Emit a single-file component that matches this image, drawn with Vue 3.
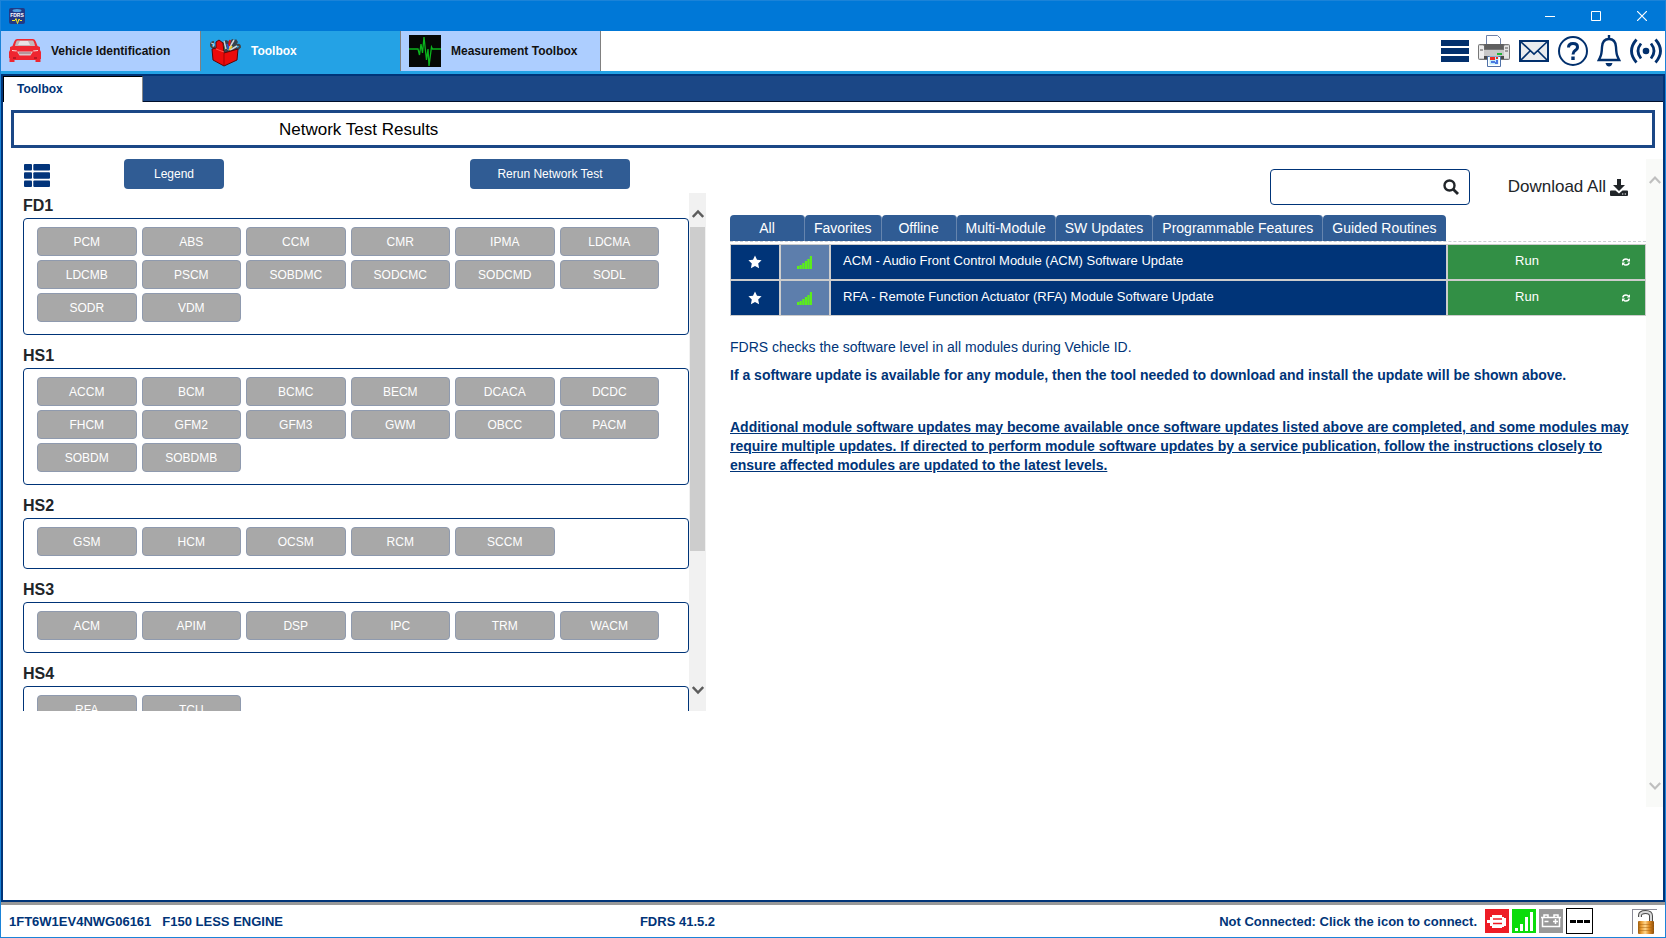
<script setup>
import { ref } from 'vue'

const search = ref('')

const networks = [
  { name: 'FD1', modules: ['PCM', 'ABS', 'CCM', 'CMR', 'IPMA', 'LDCMA', 'LDCMB', 'PSCM', 'SOBDMC', 'SODCMC', 'SODCMD', 'SODL', 'SODR', 'VDM'] },
  { name: 'HS1', modules: ['ACCM', 'BCM', 'BCMC', 'BECM', 'DCACA', 'DCDC', 'FHCM', 'GFM2', 'GFM3', 'GWM', 'OBCC', 'PACM', 'SOBDM', 'SOBDMB'] },
  { name: 'HS2', modules: ['GSM', 'HCM', 'OCSM', 'RCM', 'SCCM'] },
  { name: 'HS3', modules: ['ACM', 'APIM', 'DSP', 'IPC', 'TRM', 'WACM'] },
  { name: 'HS4', modules: ['RFA', 'TCU'] }
]

const filters = ['All', 'Favorites', 'Offline', 'Multi-Module', 'SW Updates', 'Programmable Features', 'Guided Routines']

const updates = [
  'ACM - Audio Front Control Module (ACM) Software Update',
  'RFA - Remote Function Actuator (RFA) Module Software Update'
]
</script>

<template>
  <div class="window">
    <header class="titlebar">
      <svg class="app-icon" viewBox="0 0 16 16" width="16" height="16" aria-hidden="true">
        <rect width="16" height="16" rx="2" fill="#213a86" />
        <ellipse cx="8" cy="2.5" rx="4.5" ry="1.6" fill="#4c9fe0" />
        <text x="8" y="9" text-anchor="middle" class="app-icon-text">FDRS</text>
        <path d="M3 12.5h3l1-2 1.5 5 1.5-4.500 1 1.500h2" fill="none" stroke="#f4ec2c" />
      </svg>
      <div class="window-controls">
        <button type="button" aria-label="Minimize"><svg width="10" height="10" viewBox="0 0 10 10"><path d="M0 5.500h10" stroke="#fff" /></svg></button>
        <button type="button" aria-label="Maximize"><svg width="10" height="10" viewBox="0 0 10 10"><path d="M.5.5h9v9h-9z" fill="none" stroke="#fff" /></svg></button>
        <button type="button" aria-label="Close"><svg width="10" height="10" viewBox="0 0 10 10"><path d="M0 0l10 10M10 0L0 10" stroke="#fff" stroke-width="1.200" /></svg></button>
      </div>
    </header>

    <nav class="app-tabs">
      <button type="button" class="app-tab">
        <svg class="tab-icon" width="32" height="32" viewBox="0 0 32 32" aria-hidden="true">
          <path d="M8 4h16q2 0 3 3l1.500 4 2.500 1v3l1 2v6.500q0 .5-.5.5v3h-5v-2H5.500v2h-5v-4L0 23v-6l1-2v-3l2.500-1L5 7q1-3 3-3z" fill="#ef2630" />
          <path d="M8.500 5.500h15q1.500 0 2.500 5.500H6q1-5.500 2.500-5.500z" fill="#c5b6ba" />
          <path d="M11 6h8l2 4H9z" fill="#e9e3e5" />
          <path d="M3 15l5 .5-.5 1L3 16zM29 15l-5 .5.5 1 4.500-.5z" fill="#fbdada" />
          <path d="M8 16.500h16l-2.500 4h-11z" fill="#d9c6c9" />
          <path d="M10 18h12" stroke="#93666c" />
          <path d="M4 23h3M25 23h3" stroke="#a91520" stroke-width="1.500" />
        </svg>
        Vehicle Identification
      </button>
      <button type="button" class="app-tab active">
        <svg class="tab-icon" width="32" height="32" viewBox="0 0 32 32" aria-hidden="true">
          <path d="M6 12q-4 1-4-2 0-3 3-3M27 10q4-1 4 2l-2 2" fill="none" stroke="#444" stroke-width="2" />
          <path d="M2 8l3 1-1 3" fill="none" stroke="#c4c8cc" />
          <path d="M12 8l5-3 4 2 2-3 3 1 1-1 2 3-2 3 2 4-5 5-11-2z" fill="#35424f" />
          <path d="M15 6l2 8M25 5l-6 10M28 11l-7 4" stroke="#d1d5d8" stroke-width="1.500" />
          <path d="M21 5l-1 6" stroke="#d91118" stroke-width="2" /><path d="M18 9l2 6" stroke="#2758c8" stroke-width="2" />
          <path d="M20 15l3-4" stroke="#f0d127" stroke-width="1.500" /><path d="M14 10l1 5" stroke="#24b04b" stroke-width="1.500" />
          <path d="M3 14l4-1V7l3-2 4 3 1 10 14-4-1 11-13 6-11-6z" fill="#ec0b0b" stroke="#5c0505" />
          <path d="M15 18v12" stroke="#a70303" />
          <path d="M15 17l-8-3" stroke="#ff5a4f" />
        </svg>
        Toolbox
      </button>
      <button type="button" class="app-tab">
        <svg class="tab-icon" width="32" height="32" viewBox="0 0 32 32" aria-hidden="true">
          <rect width="32" height="32" fill="#050805" />
          <path d="M0 14h9l1.500 6L12 9l1.500 9L15 2l2.500 23L19 14l1 17 2.500-19 1 2H32" fill="none" stroke="#0bb51d" stroke-width="1.300" />
        </svg>
        Measurement Toolbox
      </button>
      <div class="tools">
        <button type="button" aria-label="Menu"><svg width="28" height="22" viewBox="0 0 28 22"><path d="M0 0h28v6H0zM0 8h28v6H0zM0 16h28v6H0z" fill="#02306d" /></svg></button>
        <button type="button" aria-label="Print">
          <svg width="32" height="32" viewBox="0 0 32 32">
            <path d="M8.500 10V.5h11l3 3V10z" fill="#fff" stroke="#7182a8" />
            <path d="M5 9h22v5H5z" fill="#606060" />
            <path d="M.5 10.500q0-1 1-1H6v5h20v-5h4.500q1 0 1 1v13q0 1-1 1h-29q-1 0-1-1z" fill="#c8c8c8" stroke="#777" />
            <path d="M1 11h5v12H1z" fill="#eee" /><path d="M26 11h5v12h-5z" fill="#e4e4e4" />
            <path d="M27 13h3M27 16h3M2 15h3" stroke="#555" /><path d="M19 19h5" stroke="#22b43a" stroke-width="2" />
            <path d="M6 21h20v3H6z" fill="#4b4b4b" />
            <path d="M9.500 21.500h13v10h-13z" fill="#fff" stroke="#5072a8" />
            <path d="M11.500 21.500h9v8h-9z" fill="#bdeafa" />
            <path d="M12 22h5v3h-5zM18 22h2v2h-2z" fill="#ee2b22" /><path d="M13 27h4M18 26h2M17 28h3" stroke="#2451d8" stroke-width="1.500" />
          </svg>
        </button>
        <button type="button" aria-label="Messages"><svg width="30" height="22" viewBox="0 0 30 22"><path d="M1 1h28v20H1z" fill="#e9ebee" stroke="#02306d" stroke-width="2" /><path d="M1 1l14 13L29 1M1 21l10-10M29 21L19 11" fill="none" stroke="#02306d" stroke-width="1.700" /></svg></button>
        <button type="button" aria-label="Help"><svg width="30" height="30" viewBox="0 0 30 30"><circle cx="15" cy="15" r="14" fill="#fff" stroke="#02306d" stroke-width="2" /><path d="M10.500 11.500q0-4 4.500-4t4.500 3.600q0 2.200-2.400 3.500Q15 16 15 18.500" fill="none" stroke="#02306d" stroke-width="3" /><path d="M13.300 20.500h3.400v3.400h-3.400z" fill="#02306d" /></svg></button>
        <button type="button" aria-label="Notifications"><svg width="24" height="32" viewBox="0 0 24 32"><path d="M12 0v4M12 4q-6.500 0-7 8-.3 8-2 10.500L1.800 25h20.400L21 22.500Q19.300 20 19 12q-.5-8-7-8z" fill="none" stroke="#02306d" stroke-width="2.400" /><path d="M8.500 28h7q-1 3.500-3.500 3.500T8.500 28z" fill="#02306d" /></svg></button>
        <button type="button" aria-label="Connection"><svg width="32" height="26" viewBox="0 0 32 26"><circle cx="16" cy="13" r="3.300" fill="#02306d" /><path d="M11 5.500q-6 7.500 0 15M21 5.500q6 7.500 0 15M6.500 1.500q-10 11.500 0 23M25.500 1.500q10 11.500 0 23" fill="none" stroke="#02306d" stroke-width="2.800" /></svg></button>
      </div>
    </nav>

    <main class="workspace">
      <div class="sub-tabs"><button type="button" class="sub-tab">Toolbox</button></div>
      <h1 class="page-title">Network Test Results</h1>

      <div class="columns">
        <section class="network">
          <div class="network-actions">
            <button type="button" class="list-toggle" aria-label="List view">
              <svg width="26" height="23" viewBox="0 0 26 23"><g fill="#02347b"><rect width="8" height="6.500" rx="1" /><rect y="8.200" width="8" height="6.500" rx="1" /><rect y="16.400" width="8" height="6.500" rx="1" /><rect x="9.300" width="16.700" height="6.500" rx="1" /><rect x="9.300" y="8.200" width="16.700" height="6.500" rx="1" /><rect x="9.300" y="16.400" width="16.700" height="6.500" rx="1" /></g></svg>
            </button>
            <button type="button" class="primary legend">Legend</button>
            <button type="button" class="primary rerun">Rerun Network Test</button>
          </div>
          <div class="network-scroll">
            <div class="network-list">
              <section v-for="network in networks" :key="network.name" class="group">
                <h2>{{ network.name }}</h2>
                <div class="modules">
                  <button v-for="mod in network.modules" :key="mod" type="button" class="module">{{ mod }}</button>
                </div>
              </section>
            </div>
            <div class="scrollbar">
              <span class="arrow"><svg width="12" height="10" viewBox="0 0 12 10"><path d="M.8 8L6 2.500 11.200 8" fill="none" stroke="#5c5c5c" stroke-width="2.500" /></svg></span>
              <span class="track"><span class="thumb"></span></span>
              <span class="arrow"><svg width="12" height="10" viewBox="0 0 12 10"><path d="M.8 2L6 7.500 11.200 2" fill="none" stroke="#5c5c5c" stroke-width="2.500" /></svg></span>
            </div>
          </div>
        </section>

        <section class="software">
          <div class="software-body">
            <div class="software-actions">
              <div class="search">
                <input v-model="search" type="text" aria-label="Search" />
                <button type="button" aria-label="Search"><svg width="16" height="16" viewBox="0 0 16 16"><circle cx="6.500" cy="6.500" r="5" fill="none" stroke="#212529" stroke-width="2.400" /><path d="M10.200 10.200l4.800 4.800" stroke="#212529" stroke-width="2.800" /></svg></button>
              </div>
              <button type="button" class="download">
                Download All
                <svg width="18" height="17" viewBox="0 0 18 17"><path d="M7 0h4v6h4l-6 6-6-6h4zM1 11.500h4.500L9 14.500l3.500-3H17q1 0 1 1V16q0 1-1 1H1q-1 0-1-1v-3.500q0-1 1-1z" fill="#212529" /><path d="M12 15h1.300M14.700 15H16" stroke="#fff" stroke-width="1.200" /></svg>
              </button>
            </div>

            <div class="filters">
              <button v-for="filter in filters" :key="filter" type="button">{{ filter }}</button>
            </div>

            <table class="updates">
              <tbody>
                <tr v-for="update in updates" :key="update">
                  <td class="fav">
                    <button type="button" aria-label="Favorite"><svg width="14" height="14" viewBox="0 0 14 14"><path d="M7 .5l2 4.200 4.600.6-3.400 3.200.9 4.700L7 11l-4.100 2.200.9-4.700L.4 5.300 5 4.700z" fill="#fff" /></svg></button>
                  </td>
                  <td class="signal">
                    <svg width="15" height="13" viewBox="0 0 15 13" aria-label="Signal"><path d="M0 10h2.300v3H0zM2.600 9h2.200v4H2.600zM5.200 7h2.200v6H5.200zM7.800 5H10v8H7.800zM10.300 3h2.200v10h-2.200zM12.800 0H15v13h-2.200z" fill="#5bee1b" /></svg>
                  </td>
                  <td class="update-name"><span>{{ update }}</span></td>
                  <td class="run">
                    <button type="button">
                      <span class="run-label">Run</span>
                      <span class="run-icon"><svg width="8" height="8" viewBox="0 0 8 8"><path d="M.7 3.500Q1.200.9 4 .9q1.700 0 2.500 1.300M7.300 4.500Q6.800 7.100 4 7.100q-1.700 0-2.500-1.300" fill="none" stroke="#fff" stroke-width="1.500" /><path d="M8 .3v3.200H4.800zM0 7.700V4.500h3.200z" fill="#fff" /></svg></span>
                    </button>
                  </td>
                </tr>
              </tbody>
            </table>

            <div class="notes">
              <p>FDRS checks the software level in all modules during Vehicle ID.</p>
              <p class="strong">If a software update is available for any module, then the tool needed to download and install the update will be shown above.</p>
              <p class="strong underlined">Additional module software updates may become available once software updates listed above are completed, and some modules may require multiple updates. If directed to perform module software updates by a service publication, follow the instructions closely to ensure affected modules are updated to the latest levels.</p>
            </div>
          </div>
          <div class="scrollbar pale">
            <span class="arrow"><svg width="12" height="10" viewBox="0 0 12 10"><path d="M.8 8L6 2.500 11.200 8" fill="none" stroke="#bfbfbf" stroke-width="2.200" /></svg></span>
            <span class="track"></span>
            <span class="arrow"><svg width="12" height="10" viewBox="0 0 12 10"><path d="M.8 2L6 7.500 11.200 2" fill="none" stroke="#bfbfbf" stroke-width="2.200" /></svg></span>
          </div>
        </section>
      </div>
    </main>

    <footer class="status">
      <div class="vehicle"><span>1FT6W1EV4NWG06161</span><span>F150 LESS ENGINE</span></div>
      <div class="version">FDRS 41.5.2</div>
      <div class="connection">
        <span class="message">Not Connected: Click the icon to connect.</span>
        <button type="button" aria-label="Connect device"><svg width="24" height="24" viewBox="0 0 24 24"><rect width="24" height="24" fill="#ee1c25" /><path d="M7 6h10v2h2v1h2v8h-2v1h-2v1H7v-2H5v-3H2v-3h3V8h2z" fill="#fff" /><path d="M8 10h9M8 14.500h9" stroke="#ee1c25" stroke-width="1.500" /></svg></button>
        <svg width="24" height="24" viewBox="0 0 24 24" aria-label="Signal strength"><rect width="24" height="24" fill="#0bdc0b" /><path d="M3 19h3v3H3zM8 15h3v7H8zM13 8h3v14h-3zM18 3h3v19h-3z" fill="#fff" /></svg>
        <svg width="24" height="24" viewBox="0 0 24 24" aria-label="Battery"><rect width="24" height="24" fill="#999" /><path d="M2 8.500h20M3.500 8v9.500h17V8M5 8V6h4v2M15 8V6h4v2M5.500 12.500h4M14 12.500h5M16.500 10v5" fill="none" stroke="#fff" stroke-width="1.500" /></svg>
        <span class="voltage"><svg width="20" height="3" viewBox="0 0 20 3"><path d="M0 1.500h6M7 1.500h6M14 1.500h6" stroke="#000" stroke-width="3" /></svg></span>
        <button type="button" class="lock" aria-label="Unlocked">
          <svg width="18" height="24" viewBox="0 0 18 24">
            <defs><linearGradient id="brass"><stop offset="0" stop-color="#9a5a0c" /><stop offset=".2" stop-color="#e99a31" /><stop offset=".45" stop-color="#ffd68c" /><stop offset=".7" stop-color="#df8a22" /><stop offset="1" stop-color="#8c4c08" /></linearGradient></defs>
            <path d="M3 7V5.500Q3 2 8.500 2T14 6v6" fill="none" stroke="#4b4b4b" stroke-width="4" /><path d="M3 7V5.500Q3 2 8.500 2T14 6v6" fill="none" stroke="#d8d8d8" stroke-width="2" />
            <rect x="1" y="11" width="16" height="13" rx="1" fill="url(#brass)" /><path d="M1 14.500h16M1 17.500h16M1 20.500h16" stroke="#a9640f" stroke-opacity=".5" />
          </svg>
        </button>
      </div>
    </footer>
  </div>
</template>

<style>
body {
  margin: 0;
}
</style>

<style scoped>
* {
  box-sizing: border-box;
}
.window {
  display: flex;
  flex-direction: column;
  height: 100vh;
  border: 1px solid #1b83d8;
  background: #fff;
  color: #212529;
  font-family: "Liberation Sans", Arial, sans-serif;
  overflow: hidden;
}
button {
  margin: 0;
  padding: 0;
  border: 0;
  background: none;
  color: inherit;
  font: inherit;
  cursor: pointer;
}
svg {
  display: block;
  flex: none;
}

.titlebar {
  display: flex;
  align-items: center;
  justify-content: space-between;
  flex: none;
  height: 30px;
  padding-left: 8px;
  background: #0078d7;
}
.app-icon-text {
  fill: #fff;
  font-size: 5px;
  font-weight: bold;
}
.window-controls {
  display: flex;
  height: 100%;
}
.window-controls button {
  display: grid;
  place-items: center;
  width: 46px;
}

.app-tabs {
  display: flex;
  flex: none;
  height: 43px;
  border-bottom: 3px solid #24a2e5;
}
.app-tab {
  display: flex;
  align-items: center;
  gap: 10px;
  width: 200px;
  padding-left: 8px;
  border-right: 1px solid #808080;
  background: #adceff;
  color: #111;
  font-size: 12px;
  font-weight: bold;
}
.app-tab.active {
  background: #24a2e5;
  color: #fff;
}
.tools {
  display: flex;
  align-items: center;
  gap: 9px;
  margin-left: auto;
  padding-right: 3px;
}

.workspace {
  display: flex;
  flex: 1;
  flex-direction: column;
  min-height: 0;
  border: 2px solid #003478;
}
.sub-tabs {
  flex: none;
  height: 26px;
  border-bottom: 1px solid #000f2c;
  background: #1b4786;
}
.sub-tab {
  width: 140px;
  height: 26px;
  padding: 0 0 2px 13px;
  border: 1px solid #000;
  border-right-color: #888;
  border-bottom: 0;
  background: #fff;
  color: #003478;
  font-size: 12px;
  font-weight: bold;
  text-align: left;
}
.page-title {
  flex: none;
  height: 38px;
  margin: 8px 8px 0;
  padding-left: 265px;
  border: 3px solid #1b4786;
  color: #000;
  font-size: 17px;
  font-weight: normal;
  line-height: 33px;
}
.columns {
  display: grid;
  grid-template-columns: minmax(0, 703fr) minmax(0, 957fr);
  flex: 1;
  min-height: 0;
  padding-top: 11px;
}

.network {
  display: flex;
  flex-direction: column;
  min-height: 0;
  padding: 0 0 189px 20px;
}
.network-actions {
  display: flex;
  align-items: center;
  flex: none;
  height: 34px;
  padding-bottom: 4px;
}
.list-toggle {
  margin: 2px 74px 0 1px;
}
.primary {
  height: 30px;
  border-radius: 4px;
  background: #305c94;
  color: #fff;
  font-size: 12px;
}
.legend {
  width: 100px;
}
.rerun {
  width: 160px;
  margin: 0 76px 0 auto;
}
.network-scroll {
  display: flex;
  flex: 1;
  min-height: 0;
}
.network-list {
  flex: 1;
  overflow-y: auto;
  scrollbar-width: none;
}
.group {
  margin-bottom: 8px;
}
.group h2 {
  height: 25px;
  margin: 0;
  font-size: 16px;
  line-height: 26px;
}
.modules {
  display: grid;
  grid-template-columns: repeat(6, minmax(0, 1fr));
  gap: 4px 5px;
  padding: 8px 29px 12px 13px;
  border: 1px solid #003478;
  border-radius: 4px;
}
.module {
  height: 29px;
  border: 1px solid #8f9aae;
  border-radius: 4px;
  background: #a8a8a8;
  color: #fff;
  font-size: 12px;
}
.scrollbar {
  display: flex;
  flex: none;
  flex-direction: column;
  width: 17px;
  background: #f1f1f1;
}
.arrow {
  display: grid;
  place-items: center;
  height: 34px;
  padding-top: 8px;
}
.arrow:last-child {
  padding: 0 0 8px;
}
.track {
  flex: 1;
  padding: 0 1px;
}
.thumb {
  display: block;
  height: 72%;
  background: #cdcdcd;
}
.pale {
  background: #f9faf8;
}

.software {
  display: flex;
  min-height: 0;
  padding: 0 0 93px 24px;
}
.software-body {
  flex: 1;
  min-width: 0;
}
.software-actions {
  display: flex;
  justify-content: flex-end;
  align-items: center;
  gap: 38px;
  padding: 10px 18px 10px 0;
}
.search {
  display: flex;
  width: 200px;
  height: 36px;
  padding-right: 10px;
  border: 1px solid #003478;
  border-radius: 4px;
}
.search input {
  flex: 1;
  min-width: 0;
  padding: 0 8px;
  border: 0;
  outline: 0;
  background: none;
  font: inherit;
}
.download {
  display: flex;
  align-items: center;
  gap: 4px;
  font-size: 17px;
}
.filters {
  display: flex;
  border-bottom: 1px dashed #ccd0d6;
}
.filters button {
  min-width: 75px;
  height: 26px;
  padding: 0 9px;
  border-right: 1px solid #6685ae;
  border-radius: 4px 4px 0 0;
  background: #305c94;
  color: #fff;
  font-size: 14px;
}
.filters button:last-child {
  border-right: 0;
}
.updates {
  width: 100%;
  margin-top: 2px;
  border-spacing: 0;
  table-layout: fixed;
  color: #fff;
  font-size: 13px;
}
.updates td {
  height: 36px;
  padding: 0;
  border: 1px solid #ccc;
  background: #003478;
}
.updates .fav {
  width: 50px;
}
.updates .signal {
  width: 50px;
  padding-left: 16px;
  background: #5d7eac;
}
.fav button {
  display: grid;
  place-items: center;
  width: 100%;
  height: 34px;
}
.update-name span {
  display: block;
  padding: 0 12px 4px;
}
.updates .run {
  width: 199px;
  background: #328f45;
}
.run button {
  display: flex;
  align-items: center;
  width: 100%;
  height: 34px;
}
.run-label {
  flex: 1;
  padding-bottom: 4px;
}
.run-icon {
  display: grid;
  place-items: center;
  width: 39px;
}
.notes {
  padding-top: 22px;
  color: #003478;
  font-size: 14px;
  line-height: 19px;
}
.notes p {
  margin: 0 0 9px;
}
.notes .strong {
  font-weight: bold;
}
.notes .underlined {
  margin-top: 33px;
  text-decoration: underline;
}

.status {
  display: grid;
  grid-template-columns: 631fr auto 942fr;
  align-items: center;
  flex: none;
  height: 35px;
  padding: 0 8px;
  border-top: 3px solid #999;
  color: #003478;
  font-size: 13px;
  font-weight: bold;
}
.vehicle {
  display: flex;
  gap: 11px;
}
.connection {
  display: flex;
  align-items: center;
  justify-content: flex-end;
  gap: 3px;
}
.message {
  margin-right: 5px;
}
.voltage {
  display: grid;
  place-items: center;
  width: 27px;
  height: 26px;
  border: 1px solid #000;
}
.lock {
  width: 25px;
  margin-left: 36px;
  padding-left: 4px;
  border-top: 1px solid #8c8c98;
  border-left: 1px solid #8c8c98;
}
</style>
